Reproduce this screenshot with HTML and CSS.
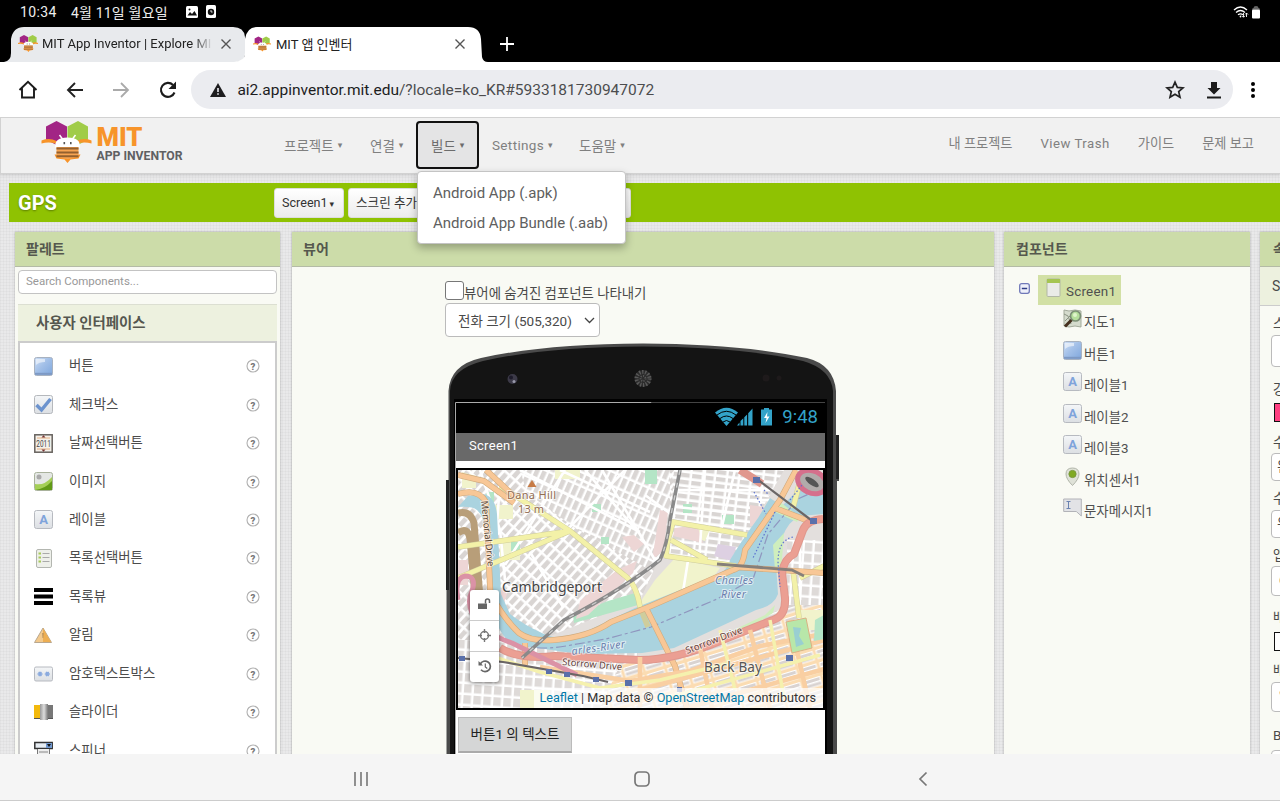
FILE: index.html
```html
<!DOCTYPE html>
<html lang="ko">
<head>
<meta charset="utf-8">
<title>MIT 앱 인벤터</title>
<link rel="stylesheet" href="styles.css">
</head>
<body>
<svg class="defs" width="0" height="0">
  <defs>
    <linearGradient id="blue" x1="0" y1="0" x2="1" y2="1"><stop offset="0" stop-color="#cfdff5"/><stop offset=".45" stop-color="#a3c0e8"/><stop offset="1" stop-color="#7ea6dc"/></linearGradient>
    <linearGradient id="gray" x1="0" y1="0" x2="0" y2="1"><stop offset="0" stop-color="#f4f6f8"/><stop offset="1" stop-color="#dcdfe3"/></linearGradient>
    <linearGradient id="knob" x1="0" x2="1"><stop offset="0" stop-color="#999"/><stop offset=".5" stop-color="#ddd"/><stop offset="1" stop-color="#777"/></linearGradient>
    <symbol id="bee" viewBox="0 0 50 42">
      <path fill="#a22585" d="M4.500 5.500L15 0l10.500 5.500v13L15 24 4.500 18.500z"/>
      <path fill="#a0cc48" d="M26 5.500L36.500 0 46.500 5.500v13L36.500 24 26 18.500z"/>
      <path fill="#f7942a" d="M0 19.500q8-3 15 .5v3Q8 20.500 0 22.500zM50 19.500q-8-3-15 .5v3q7-2.500 15-.5zM13 33.500h26l-2 4-8 1-3 3.500-3-3.500-8-1z"/>
      <path fill="#fff" d="M14 27q-2-10.500 12-10.500T38 27z"/>
      <path d="M21 18l-3-4M31 18l3-4" stroke="#fff" stroke-width="1.500"/>
      <path fill="#f7a452" d="M15 26h22v9q-5 3-11 3t-11-3z"/>
      <path d="M15 27.500h22M15 31.500h22M15 35.300h22" stroke="#93602f" stroke-width="1.900"/>
      <path fill="#555" d="M22 21h1.600v2.200H22zM28.500 21h1.600v2.200h-1.600z"/>
    </symbol>
    <symbol id="i-button" viewBox="0 0 19 19"><rect x=".5" y=".5" width="18" height="18" rx="2" fill="url(#blue)" stroke="#a8b2c0"/><path d="M1 16.800h17" stroke="#7d99c4" stroke-width="2"/><path d="M2 2h9v3q-6 0-9 3z" fill="#fff" opacity=".55"/></symbol>
    <symbol id="i-check" viewBox="0 0 19 19"><rect x=".5" y=".5" width="18" height="18" rx="2" fill="url(#gray)" stroke="#b5b8bc"/><path d="M2.500 10l5 5L16.500 4" fill="none" stroke="#6c93ce" stroke-width="3.500"/></symbol>
    <symbol id="i-date" viewBox="0 0 19 19"><rect x=".8" y=".8" width="17.400" height="17.400" fill="#f5f1eb" stroke="#66625e" stroke-width="1.500"/><path d="M3 4h13M3 15h13" stroke="#e6b082"/><path d="M7.500 3.500l2-2.200 2 2.200zM7.500 15.500l2 2.200 2-2.200z" fill="#733"/><text x="2.300" y="13" font-family="Roboto" font-size="9" textLength="14.500" lengthAdjust="spacingAndGlyphs" fill="#444">2011</text></symbol>
    <symbol id="i-image" viewBox="0 0 19 19"><rect x=".5" y=".5" width="18" height="18" rx="2" fill="#e4e7e4" stroke="#a9b29c"/><circle cx="5" cy="5" r="2.500" fill="#aaa"/><path d="M1 12q9 2 17-7v13H1z" fill="#a4cf56"/><path d="M1 18q10-1 17-9v9z" fill="#619a16"/></symbol>
    <symbol id="i-label" viewBox="0 0 19 19"><rect x=".5" y=".5" width="18" height="18" rx="2" fill="url(#gray)" stroke="#b7bac0"/><text x="9.500" y="14" text-anchor="middle" font-family="Roboto" font-weight="700" font-size="13" fill="#7fa3db">A</text></symbol>
    <symbol id="i-list" viewBox="0 0 19 19"><rect x="2.500" y=".5" width="15" height="18" rx="1.500" fill="#eef0ea" stroke="#b3b6b0"/><path d="M4.500 4.500h2.500M4.500 8.500h2.500M4.500 12.500h2.500" stroke="#a8c95a" stroke-width="2"/><path d="M8.500 4.500h7M8.500 8.500h7M8.500 12.500h7" stroke="#aaa"/></symbol>
    <symbol id="i-listview" viewBox="0 0 19 19"><path d="M0 3h19M0 9.500h19M0 16h19" stroke="#000" stroke-width="4.200"/></symbol>
    <symbol id="i-warn" viewBox="0 0 19 19"><path d="M9 2L17.500 16.500H.5z" fill="#f3c98c" stroke="#b8a78f"/><path d="M9 2l8 14H9z" fill="#edae52"/><path d="M8.300 7h1.200l-.3 5h-.6z" fill="#a78254"/></symbol>
    <symbol id="i-pass" viewBox="0 0 19 19"><rect x=".5" y="3" width="18" height="14" rx="1.500" fill="url(#gray)" stroke="#b7bac0"/><path d="M3.500 10h5M4.800 7.800l2.500 4.400M7.300 7.800l-2.500 4.400M10.800 10h5M12.100 7.800l2.500 4.400M14.600 7.800l-2.500 4.400" stroke="#8aaade" stroke-width="1.500"/></symbol>
    <symbol id="i-slider" viewBox="0 0 19 19"><path d="M0 2h8v14H0z" fill="#f3b90c"/><path d="M12 2h7v14h-7z" fill="#777"/><path d="M0 15.500h19" stroke="#555"/><path d="M6 1h8v16H6z" fill="url(#knob)"/></symbol>
    <symbol id="i-spinner" viewBox="0 0 19 19"><path d="M.8 1.500h17.400v6H.8z" fill="#e7edf3" stroke="#333" stroke-width="1.500"/><path d="M12 2h6v5h-6z" fill="#7198cf"/><path d="M13 3h4l-2 3z" fill="#111"/><path d="M3.500 8v11h12V8" fill="#eee" stroke="#777"/><path d="M5 11h9M5 14h9" stroke="#888"/></symbol>
    <symbol id="i-help" viewBox="0 0 14 14"><circle cx="7" cy="7" r="6" fill="#fff" stroke="#b0b0b0" stroke-width="1.100"/><text x="7" y="10.500" text-anchor="middle" font-family="Roboto" font-weight="900" font-size="9.500" fill="#777">?</text></symbol>
    <symbol id="i-screen" viewBox="0 0 19 19"><rect x="3" y="1" width="13" height="17.500" rx="1" fill="#eaebe7" stroke="#b1b7a6"/><path d="M3 1h13v4H3z" fill="#a5c552"/></symbol>
    <symbol id="i-map" viewBox="0 0 19 19"><path d="M1 1l5 1 6-1 6 1v16l-6-1-6 1-5-1z" fill="#d5dbcd" stroke="#a3aa9b"/><path d="M1 5l4 2 3 8M2 12l5-5" stroke="#8b9382" fill="none"/><circle cx="12.500" cy="7" r="5" fill="#b5df9c" stroke="#7b8f75" stroke-width="1.700"/><path d="M8.500 11L2 17.500" stroke="#46301e" stroke-width="3"/><circle cx="12" cy="6" r="2" fill="#dff5cc"/></symbol>
    <symbol id="i-pin" viewBox="0 0 19 19"><path d="M9.500 18.500Q3 12 3 7q0-6 6.500-6T16 7q0 5-6.500 11.500z" fill="#dfe2d8" stroke="#b1b5aa"/><circle cx="9.500" cy="7" r="3.600" fill="#80aa23" stroke="#78993a"/></symbol>
    <symbol id="i-sms" viewBox="0 0 19 19"><path d="M.7 1h17.600v12.500V18l-5-4.500H.7z" fill="#e2e3e6" stroke="#b2b3b8"/><path d="M3.500 3.500h4M5.500 3.500v7M3.500 10.500h4" stroke="#6b83b0"/></symbol>
    <pattern id="blkA" width="12" height="7.500" patternUnits="userSpaceOnUse" patternTransform="rotate(-48)"><rect width="12" height="7.500" fill="#fff"/><rect x="1" y="1" width="9.500" height="4.700" fill="#d9d5d3"/></pattern>
    <pattern id="blkB" width="7" height="13" patternUnits="userSpaceOnUse" patternTransform="rotate(24)"><rect width="7" height="13" fill="#fff"/><rect x="1" y="1" width="4.600" height="10.500" fill="#dad6d4"/></pattern>
    <pattern id="blkC" width="12" height="7" patternUnits="userSpaceOnUse" patternTransform="rotate(7)"><rect width="12" height="7" fill="#fff"/><rect x="1" y="1" width="9.500" height="4.300" fill="#d9d5d3"/></pattern>
    <pattern id="blkD" width="21" height="13" patternUnits="userSpaceOnUse" patternTransform="rotate(-17)"><rect width="21" height="13" fill="#fbdcb2"/><rect x="1.500" y="2" width="18" height="9.500" fill="#fff"/><rect x="2.500" y="3" width="16" height="3" fill="#d9d3d1"/><rect x="2.500" y="7.500" width="16" height="3" fill="#d9d3d1"/></pattern>
    <pattern id="blkE" width="10" height="11" patternUnits="userSpaceOnUse" patternTransform="rotate(4)"><rect width="10" height="11" fill="#fff"/><rect x="1" y="1" width="7.500" height="8.500" fill="#dedad8"/></pattern>
  </defs>
</svg>

<div class="status">
  <span class="st-time">10:34</span><span class="st-date">4월 11일 월요일</span>
  <svg class="st-ic1" width="12" height="12" viewBox="0 0 12 12"><rect width="12" height="12" rx="1.500" fill="#fff"/><path d="M1.500 9.500L4 6l2 2 2.500-3 2.500 4.500z" fill="#111"/><circle cx="3.500" cy="3.500" r="1" fill="#111"/></svg>
  <svg class="st-ic2" width="10" height="13" viewBox="0 0 10 13"><rect width="10" height="13" rx="1.500" fill="#fff"/><circle cx="5" cy="7" r="3.200" fill="#111"/><path d="M5 5v2h1.600" stroke="#fff" fill="none" stroke-width=".8"/></svg>
  <svg class="st-right" width="28" height="14" viewBox="0 0 28 14"><g fill="none" stroke="#fff" stroke-width="1.300"><path d="M1 5q6.500-6 13 0M3 7.500q4.500-4 9 0M5 9.800q2.500-2 5 0"/></g><circle cx="7.500" cy="11.500" r=".9" fill="#fff"/><path d="M10.500 8v4M9 10.800l1.500 1.500 1.500-1.500M13.500 12V8M12 9.500l1.500-1.500L15 9.500" stroke="#fff" fill="none" stroke-width=".9"/><path d="M19 4.500q0-1.500 1.500-1.500 0-2 2.500-2t2.500 2q1.500 0 1.500 1.500z" fill="#666"/><rect x="19" y="4.500" width="8" height="9" rx="1" fill="#fff"/></svg>
</div>

<div class="tabs">
  <svg class="tab-bg" width="500" height="37" viewBox="0 0 500 37"><path d="M4 37q7-1 7-9V14Q13 2 24 2h209q11 0 12 10v18q-1 7-8 7z" fill="#e8eaed"/><path d="M234 37q11-1 11-9V14q2-12 12-12h211q12 0 13 12l1 18q1 5 6 5z" fill="#fff"/></svg>
  <div class="tab tab-one"><svg width="20" height="19"><use href="#bee"/></svg><span class="tab-title">MIT App Inventor | Explore MI</span><svg class="x" width="10" height="10" viewBox="0 0 10 10"><path d="M.5.500l9 9M9.500.500l-9 9"/></svg></div>
  <div class="tab tab-two"><svg width="18" height="18"><use href="#bee"/></svg><span class="tab-title2">MIT 앱 인벤터</span><svg class="x" width="10" height="10" viewBox="0 0 10 10"><path d="M.5.500l9 9M9.500.500l-9 9"/></svg></div>
  <svg class="plus" width="14" height="14" viewBox="0 0 14 14"><path d="M7 0v14M0 7h14" stroke="#fff" stroke-width="1.800"/></svg>
</div>

<div class="toolbar">
  <svg width="20" height="20" viewBox="0 0 20 20"><path d="M1.500 10L10 1.800 18.500 10M4 8v9.500h12V8" fill="none" stroke="#1b1b1b" stroke-width="1.900"/></svg>
  <svg width="20" height="20" viewBox="0 0 20 20"><path d="M18 10H3M10 3l-7 7 7 7" fill="none" stroke="#222" stroke-width="1.900"/></svg>
  <svg width="20" height="20" viewBox="0 0 20 20"><path d="M2 10h15M10 3l7 7-7 7" fill="none" stroke="#aaa" stroke-width="1.800"/></svg>
  <svg width="20" height="20" viewBox="0 0 20 20"><path d="M16.500 12.500A7 7 0 1 1 15 5" fill="none" stroke="#1b1b1b" stroke-width="2.100"/><path d="M18 1.500V9h-7.500z" fill="#1b1b1b"/></svg>
  <div class="omni">
    <svg width="16" height="14" viewBox="0 0 16 14"><path d="M8 0l8 14H0z" fill="#1d1d1f"/><path d="M7.200 5h1.600v4H7.200zM7.200 10.200h1.600v1.600H7.200z" fill="#ebecf0"/></svg>
    <span class="url"><b>ai2.appinventor.mit.edu</b>/?locale=ko_KR#5933181730947072</span>
    <svg class="star" width="20" height="20" viewBox="0 0 20 20"><path d="M10 2.200l2.300 5.200 5.700.5-4.300 3.700 1.300 5.600-5-3-5 3 1.300-5.600L2 7.900l5.700-.5z" fill="none" stroke="#222" stroke-width="1.700"/></svg>
    <svg class="down" width="16" height="18" viewBox="0 0 16 18"><path d="M5 1h6v6h3.500L8 13.500 1.500 7H5zM1 15.500h14V17.500H1z" fill="#1b1b1b"/></svg>
  </div>
  <svg class="dots" width="6" height="18" viewBox="0 0 6 18"><circle cx="3" cy="3" r="2"/><circle cx="3" cy="9" r="2"/><circle cx="3" cy="15" r="2"/></svg>
</div>

<div class="app">
  <div class="head">
    <svg class="logo" width="145" height="46" viewBox="0 0 145 46"><use href="#bee" x="0" y="3" width="51" height="42"/><text x="55.500" y="28" font-family="Roboto" font-weight="900" font-size="25" fill="#f7942a" textLength="46" lengthAdjust="spacingAndGlyphs">MIT</text><text x="55.500" y="42" font-family="Roboto" font-weight="700" font-size="13.500" fill="#5f6062" textLength="86" lengthAdjust="spacingAndGlyphs">APP INVENTOR</text></svg>
    <div class="menu">
      <span class="m m1">프로젝트<i>▾</i></span><span class="m m2">연결<i>▾</i></span>
      <span class="m sel">빌드<i>▾</i>
        <div class="popup"><div>Android App (.apk)</div><div>Android App Bundle (.aab)</div></div>
      </span>
      <span class="m m4">Settings<i>▾</i></span><span class="m m5">도움말<i>▾</i></span>
    </div>
    <div class="links"><span>내 프로젝트</span><span class="lat">View Trash</span><span>가이드</span><span>문제 보고</span></div>
  </div>
  <div class="green"><h1>GPS</h1><span class="gb gb1">Screen1<i>▾</i></span><span class="gb gb2">스크린 추가</span><span class="gb gb3"></span></div>
  <div class="cols">
    <section class="panel p1"><h2>팔레트</h2>
      <div class="search">Search Components...</div>
      <h3>사용자 인터페이스</h3>
      <ul class="pal">
        <li><svg><use href="#i-button"/></svg><span>버튼</span><svg class="h"><use href="#i-help"/></svg></li>
        <li><svg><use href="#i-check"/></svg><span>체크박스</span><svg class="h"><use href="#i-help"/></svg></li>
        <li><svg><use href="#i-date"/></svg><span>날짜선택버튼</span><svg class="h"><use href="#i-help"/></svg></li>
        <li><svg><use href="#i-image"/></svg><span>이미지</span><svg class="h"><use href="#i-help"/></svg></li>
        <li><svg><use href="#i-label"/></svg><span>레이블</span><svg class="h"><use href="#i-help"/></svg></li>
        <li><svg><use href="#i-list"/></svg><span>목록선택버튼</span><svg class="h"><use href="#i-help"/></svg></li>
        <li><svg><use href="#i-listview"/></svg><span>목록뷰</span><svg class="h"><use href="#i-help"/></svg></li>
        <li><svg><use href="#i-warn"/></svg><span>알림</span><svg class="h"><use href="#i-help"/></svg></li>
        <li><svg><use href="#i-pass"/></svg><span>암호텍스트박스</span><svg class="h"><use href="#i-help"/></svg></li>
        <li><svg><use href="#i-slider"/></svg><span>슬라이더</span><svg class="h"><use href="#i-help"/></svg></li>
        <li><svg><use href="#i-spinner"/></svg><span>스피너</span><svg class="h"><use href="#i-help"/></svg></li>
      </ul>
    </section>
    <section class="panel p2"><h2>뷰어</h2>
      <div class="viewer">
        <div class="cbrow"><span class="cb"></span><span class="cbt">뷰어에 숨겨진 컴포넌트 나타내기</span></div>
        <div class="select"><span>전화 크기 (505,320)</span><svg width="11" height="7" viewBox="0 0 11 7"><path d="M1 1l4.500 4.500L10 1" fill="none" stroke="#444" stroke-width="1.300"/></svg></div>
        <div class="phone">
          <svg class="frame" width="396" height="416" viewBox="0 0 396 416">
            <path d="M1.500 420V138h2V48Q5 22 36 15 100 1 198 .5q98 .5 164 14.500 27 7 29 33v46h3v44h-2v282z" fill="#4a4a4a"/>
            <path d="M5 420V48Q6 26 38 18 100 4 198 3.500q98 .5 160 14.500 28 8 30 30v372z" fill="#141414"/>
            <path d="M1 137h3v110H1zM391 92h3v44h-3z" fill="#222"/>
            <path d="M9 56h373v360H9z" fill="#000"/><path d="M10.500 416V59.500h196" fill="none" stroke="#aaa"/><path d="M207 59.500h173" stroke="#444"/>
            <circle cx="67.500" cy="36" r="5" fill="#3c3a48"/><circle cx="66" cy="34.500" r="2" fill="#1d1b2a"/><circle cx="69" cy="38.500" r="1.500" fill="#99a"/>
            <circle cx="198" cy="35.500" r="8.500" fill="#2c2c2c"/><circle cx="198" cy="35.500" r="6.500" fill="none" stroke="#5a5a5a" stroke-width="4" stroke-dasharray="1.300 1.600"/><circle cx="198" cy="35.500" r="2.500" fill="none" stroke="#5a5a5a" stroke-width="2" stroke-dasharray="1 1.300"/>
            <circle cx="321" cy="35" r="3.500" fill="#1e1a1b"/><circle cx="334" cy="35" r="2.500" fill="#1e1a1b"/>
          </svg>
          <div class="screen">
            <div class="pstat">
              <svg width="60" height="20" viewBox="0 0 60 20"><path d="M0 5.500Q11.500-4 23 5.500L11.500 19z" fill="#33a3c9"/><path d="M2 8q9.500-7.500 19 0M5 11.500q6.500-5 13 0M8 15q3.500-3 7 0" fill="none" stroke="#000" stroke-width="1"/><path d="M22 18.500h2.500v-3zM25.500 18.500V14l2.800-2.800v7.300zM29.300 18.500v-8.300l2.800-2.800v11.100zM33.200 18.500V6.200L37.500 1.500v17z" fill="#33a3c9"/><path d="M46 2.500h3V1h5v1.500h3v16H46z" fill="#33a3c9"/><path d="M52.500 5l-3.500 6h2.500L50.500 16l4-6.500H52z" fill="#fff"/></svg>
              <span>9:48</span>
            </div>
            <div class="ptitle">Screen1</div>
            <div class="map">
              <svg width="366" height="238" viewBox="458 470 366 238">
                <rect x="458" y="470" width="366" height="238" fill="#e3dfdd"/>
                <path d="M458 470h170L700 470 640 600 540 640 458 640z" fill="url(#blkA)"/>
                <path d="M520 470h150v55l-20 45-75-42-48-35z" fill="url(#blkB)"/>
                <path d="M674 470h110l-40 70v25l-76-10z" fill="url(#blkC)"/>
                <path d="M458 640h180v68H458z" fill="url(#blkE)"/>
                <path d="M620 665l90-22 114-55v120H600z" fill="url(#blkD)"/>
                <path d="M787 540h37v65h-37z" fill="url(#blkE)"/>
                <path d="M495 505h18v14h-18zM500 540h20v20h-20zM555 470h25v9h-25zM655 580l20-22 45 10-10 14-45 20-30 8zM690 525l20 4-5 12-18-5zM520 690h30v18h-30zM800 610h24v20h-24zM462 472l14 4v12h-14z" fill="#f1f3cc"/>
                <path d="M573 615l35-14 27-8 3 12-28 8-36 10zM645 470h12v14h-12zM683 504h9v9h-9zM722 515h12v9h-12zM592 504h9v8h-9zM511 542h9v9h-9zM601 537h8v7h-8zM486 492h8v10h-8z" fill="#b4e5c6"/>
                <path d="M617 570l20-9-4 12-45 42-12 4 4-18zM660 510l8 2-4 38-12 10zM675 528l22-3 6 18-30-7zM750 505l14 2-7 19h-7zM622 537l12-2 10 9-10 8zM495 582l12 12-6 18-8-10zM458 560h10v25h-10z" fill="#edd6d5"/>
                <path d="M718 544l18 3-4 14-18-5z" fill="#ddd0e2"/>
                <path d="M520 470l120 62M560 470l90 42M585 470l58 68M602 470l53 90M480 470l20 60 5 50M625 470l-60 62M500 484l-5 65M530 552l33 55M565 470l-60 95M673 490h100M705 470l-6 92M735 470l-15 65M645 495l30 22M690 548l-8 50M800 540v60M735 500h35M676 507l70 7" stroke="#fff" stroke-width="2.600" fill="none"/>
                <path d="M458 507q14-1 19 3 7 6 8 22l3 62q2 26 22 50l55 8 20 2 57-1 32-5 82-38q18-4 22-16l-2-30 6-26q6-17 18-22l23-2v-30l-23 4-18 18-12-8-12 20q-18 25-28 42-2 12-20 18l-75 30q-25 12-58 28-20 4-33-2-20-9-34-20l-9-20-4-80q-2-18-14-20l-15 2z" fill="#aad3df"/>
                <path d="M780 502l20 15-3 5-22-10zM773 545l11-12-3 40-6-3zM740 627l25-12 10-10-2 8-16 10-44 18z" fill="#cfeebd"/>
                <path d="M458 533q10-7 12 6l6 68M458 513q12-3 16 10l6 75" stroke="#b89e79" stroke-width="7" fill="none"/>
                <path d="M500 640q35 12 66 6l40-7 45-12 66-28 36-20 15-45 30-35 26-12" fill="none" stroke="#8f96bf" stroke-width="1.200" stroke-dasharray="10 3 3 3"/>
                <g fill="none" stroke-linejoin="round">
                  <path d="M458 547l112-16M458 578l112-47M500 486l70 45 54 44q12 8 16 32l8 20M747 535l-74-13-5 18-2 16 70 10M671 540l36 20M793 508l10-38M793 570l6 48M800 578l24-12" stroke="#cfcd9c" stroke-width="5.600"/>
                  <path d="M458 547l112-16M458 578l112-47M500 486l70 45 54 44q12 8 16 32M747 535l-74-13-5 18-2 16 70 10M671 540l36 20M793 508l10-38M793 570l6 48M800 578l24-12" stroke="#f3f1a8" stroke-width="4.600"/>
                  <path d="M458 475l26 6 30 22M486 470l30 28M458 494q20-6 28 8l5 105M495 602q12 20 24 31 12 9 35 7 35-3 57-18l40-16 82-36q10-2 12-20l35-50 16-30M736 567l88 6M645 606l30 60 12 42M775 508l36 14M525 665v-22" stroke="#d0aa7c" stroke-width="6"/>
                  <path d="M458 475l26 6 30 22M486 470l30 28M458 494q20-6 28 8l5 105M495 602q12 20 24 31 12 9 35 7 35-3 57-18l40-16 82-36q10-2 12-20l35-50 16-30M736 567l88 6M645 606l30 60 12 42M775 508l36 14M525 665v-22" stroke="#f8c796" stroke-width="4.800"/>
                  <path d="M500 648q20 12 55 8 60 3 85 4 35 0 80-19l53-21q13-4 12-22l-3-25q2-14 12-19l9-24q4-10 20-11M740 470l22 14" stroke="#e0978d" stroke-width="8"/>
                  <path d="M500 648q20 12 55 8 60 3 85 4 35 0 80-19l53-21q13-4 12-22l-3-25q2-14 12-19l9-24q4-10 20-11" stroke="#eb9f93" stroke-width="6"/>
                  <path d="M540 667l90 14 60-10 70-25 64-12M640 657v50M700 648l12 60M750 630l20 78M640 690l184-50M690 707l134-38M790 620l20 88" stroke="#f9cfa2" stroke-width="4.600"/>
                  <path d="M480 652l60 20 60 16 60-8 70-17M720 630l15 60M770 620l14 78M660 700l160-45" stroke="#f5f1ae" stroke-width="3.500"/>
                  <path d="M458 600q-4-22 7-24 12 0 7 15-5 10 0 22 10 20 40 30l65 32" stroke="#db92a6" stroke-width="5"/>
                  <path d="M680 470l-10 50q-3 25-10 40-35 28-96 60l-42 38" stroke="#8a8a8a" stroke-width="3.600"/><path d="M680 470l-10 50q-3 25-10 40-35 28-96 60l-42 38" stroke="#ccc" stroke-width="1.300" stroke-dasharray="5 8"/>
                  <path d="M458 658l45 4 80 14 25 6M757 479l58 44" stroke="#6b6666" stroke-width="2.200"/>
                  <path d="M717 564l75 6 12 6" stroke="#857f7a" stroke-width="2.800"/>
                  <ellipse cx="812" cy="482" rx="15" ry="11" fill="#b1acab" stroke="#d5708c" stroke-width="5" transform="rotate(25 812 482)"/><ellipse cx="812" cy="482" rx="8" ry="3" fill="#555" transform="rotate(35 812 482)"/>
                </g>
                <path d="M786 622l20-4 6 30-20 5z" fill="#b8e7a9" stroke="#d9b184"/><path d="M793 627l8 1-2 8 5 8-8 3z" fill="#99cfd1"/><path d="M815 620l9-5v24l-10 2z" fill="#b4e5c6"/>
                <path d="M753 477h7v6h-7zM810 518h7v6h-7zM459 656h6v5h-6zM546 669h6v5h-6zM564 672h6v5h-6zM593 677h6v5h-6zM625 680h7v6h-7zM786 655h7v6h-7zM677 687h5v5h-5z" fill="#5a70aa"/>
                <path d="M754 492l12 22M775 512l-22 46M793 537q-15 3-15 25l2 25M790 500l12-15M764 490l5 5" fill="none" stroke="#5c72d0" stroke-width="1.200" stroke-dasharray="1.500 2"/>
                <path d="M532 480l4.500 7h-9z" fill="#c77b45"/>
                <g font-family="Noto Sans" paint-order="stroke" stroke="#fff" stroke-opacity=".6" stroke-width="2">
                  <g fill="#936d52" font-size="11"><text x="507" y="499" textLength="49">Dana Hill</text><text x="518" y="513" textLength="26">13 m</text></g>
                  <text x="502" y="592" font-size="14" fill="#444" textLength="100">Cambridgeport</text>
                  <text x="704" y="672" font-size="13.500" fill="#555" textLength="58">Back Bay</text>
                  <g font-size="10.500" font-style="italic" fill="#6a7fae"><text x="715" y="584" textLength="38">Charles</text><text x="721" y="598" textLength="25">River</text><text x="572" y="655" transform="rotate(-8 572 655)" textLength="54">arles-River</text></g>
                  <g font-size="9.500" fill="#643f3a"><text x="562" y="665" transform="rotate(5 562 665)" textLength="60">Storrow Drive</text><text x="687" y="654" transform="rotate(-21 687 654)" textLength="60">Storrow Drive</text><text x="481" y="501" transform="rotate(84 481 501)" textLength="66" fill="#5a4938">Memorial Drive</text></g>
                </g>
              </svg>
              <div class="mapctl">
                <div><svg width="13" height="12" viewBox="0 0 13 12"><path d="M0 5.500h9V11H0z" fill="#666"/><path d="M7.500 5.500V3q0-2 2-2t2 2v2" fill="none" stroke="#666" stroke-width="1.500"/></svg></div>
                <div><svg width="13" height="13" viewBox="0 0 13 13"><circle cx="6.500" cy="6.500" r="4" fill="none" stroke="#777" stroke-width="1.400"/><path d="M6.500 0v4M6.500 9v4M0 6.500h4M9 6.500h4" stroke="#777" stroke-width="1.400"/></svg></div>
                <div><svg width="14" height="13" viewBox="0 0 14 13"><path d="M2.300 4A5.300 5.300 0 1 1 3 9.800" fill="none" stroke="#666" stroke-width="1.700"/><path d="M.5 1v4.500H5z" fill="#666"/><path d="M7.300 3.500V7l2 1.500" fill="none" stroke="#666" stroke-width="1.200"/></svg></div>
              </div>
              <div class="attr"><a>Leaflet</a> | Map data © <a>OpenStreetMap</a> contributors</div>
            </div>
            <div class="pbtn">버튼1 의 텍스트</div>
          </div>
        </div>
      </div>
    </section>
    <section class="panel p3"><h2>컴포넌트</h2>
      <div class="tree">
        <div class="root"><svg class="col" width="11" height="11" viewBox="0 0 11 11"><rect x=".7" y=".7" width="9.600" height="9.600" rx="2" fill="#eef0fa" stroke="#7078b8" stroke-width="1.300"/><path d="M2.800 5.500h5.400" stroke="#2d3a86" stroke-width="1.500"/></svg><div class="rootsel"><svg><use href="#i-screen"/></svg><span>Screen1</span></div></div>
        <div class="t"><svg><use href="#i-map"/></svg><span>지도1</span></div>
        <div class="t"><svg><use href="#i-button"/></svg><span>버튼1</span></div>
        <div class="t"><svg><use href="#i-label"/></svg><span>레이블1</span></div>
        <div class="t"><svg><use href="#i-label"/></svg><span>레이블2</span></div>
        <div class="t"><svg><use href="#i-label"/></svg><span>레이블3</span></div>
        <div class="t"><svg><use href="#i-pin"/></svg><span>위치센서1</span></div>
        <div class="t"><svg><use href="#i-sms"/></svg><span>문자메시지1</span></div>
      </div>
    </section>
    <section class="panel p4"><h2>속성</h2>
      <div class="sub">Screen1</div>
      <div class="props">
        <label class="l1">스크린 소개</label><div class="in i1"></div>
        <label class="l2">강조 색상</label><div class="sw pink"></div>
        <label class="l3">수평 정렬</label><div class="in i3">왼쪽</div>
        <label class="l4">수직 정렬</label><div class="in i4">위</div>
        <label class="l5">앱 이름</label><div class="in i5">GPS</div>
        <label class="l6">배경 색상</label><div class="sw white"></div>
        <label class="l7">배경 이미지</label><div class="in i7">없음</div>
        <label class="l8">BlocksToolkit</label><div class="in i8"></div>
      </div>
    </section>
  </div>
</div>

<div class="nav">
  <svg width="16" height="16" viewBox="0 0 16 16"><path d="M2 1v14M8 1v14M14 1v14" stroke="#777" stroke-width="1.600"/></svg>
  <svg width="16" height="16" viewBox="0 0 16 16"><rect x="1" y="1" width="14" height="14" rx="4" fill="none" stroke="#777" stroke-width="1.700"/></svg>
  <svg width="16" height="16" viewBox="0 0 16 16"><path d="M11.500 1.500L5 8l6.500 6.500" fill="none" stroke="#777" stroke-width="1.700"/></svg>
</div>
</body>
</html>
```

FILE: styles.css
```css
* { box-sizing: border-box; }
body { margin: 0; width: 1280px; height: 801px; overflow: hidden; display: flex; flex-direction: column; background: #fff; font-family: Roboto, "Noto Sans CJK KR", sans-serif; color: #4a4a4a; }
svg { display: block; flex: none; }
svg.defs { position: absolute; }
span, label, h1, h2, h3 { white-space: nowrap; }
i { font-style: normal; font-family: "DejaVu Sans", sans-serif; }

.status { height: 25px; background: #000; color: #eee; display: flex; align-items: center; padding: 0 19px 2px 20px; font-size: 14px; flex: none; }
.st-time { letter-spacing: .4px; }
.st-date { margin-left: 14px; letter-spacing: .2px; }
.st-ic1 { margin-left: 18px; }
.st-ic2 { margin-left: 8px; }
.st-right { margin-left: auto; }

.tabs { height: 37px; background: #000; display: flex; align-items: center; position: relative; flex: none; font-size: 13px; color: #222; }
.tab-bg { position: absolute; left: 0; top: 0; }
.tab { display: flex; align-items: center; position: relative; gap: 4px; }
.tab-one { width: 234px; padding-left: 18px; }
.tab-two { width: 235px; padding-left: 19px; gap: 5px; }
.tab-title { width: 171px; overflow: hidden; -webkit-mask-image: linear-gradient(90deg, #000 88%, transparent); mask-image: linear-gradient(90deg, #000 88%, transparent); }
.tab .x { stroke: #555; stroke-width: 1.4; margin-left: auto; }
.tab-one .x { margin-right: 3px; }
.tab-two .x { margin-right: 4px; }
.plus { margin-left: 31px; }

.toolbar { height: 55px; background: #fff; display: flex; align-items: center; flex: none; padding-left: 18px; }
.toolbar > svg { margin-right: 26.600px; }
.omni { width: 1042px; height: 39px; margin-left: -13px; border-radius: 20px; background: #ebecf0; display: flex; align-items: center; padding-left: 19px; }
.url { font-size: 15.500px; color: #4c4c4e; margin-left: 11px; letter-spacing: 0; }
.url b { font-weight: 400; color: #1c1c1e; }
.star { margin-left: auto; }
.down { margin: 0 11px 0 21px; }
.toolbar > .dots { margin: 0 0 0 17px; }

.app { flex: none; height: 637px; overflow: hidden; background-color: #e9e9ea; background-image: repeating-linear-gradient(0deg, rgba(120,120,120,.05) 0 1px, transparent 1px 3px), repeating-linear-gradient(90deg, rgba(120,120,120,.05) 0 1px, transparent 1px 3px); }
.head { height: 57px; background: #f1f1f1; border: 1px solid #d2d2d2; border-right: 0; display: flex; box-shadow: 0 1px 3px rgba(0,0,0,.12); font-size: 13.500px; color: #808080; }
.logo { margin-left: 40px; }
.menu { display: flex; margin-left: 84px; padding-top: 3px; }
.m { height: 48px; display: flex; align-items: center; padding: 0 14px; position: relative; }
.m i { font-size: 9px; margin-left: 4px; }
.sel { background: #e4e4e5; border: 2px solid #111; border-radius: 4px; padding: 0 13px; margin: 0 -1px; color: #6c6c6c; }
.m1 { width: 86px; }
.m2 { width: 61px; }
.sel { width: 63px; }
.m4 { width: 87px; letter-spacing: .35px; }
.popup { position: absolute; left: -1px; top: 48px; width: 209px; height: 73px; background: #fff; border: 1px solid #c4c4c4; border-radius: 4px; box-shadow: 0 4px 9px rgba(0,0,0,.28); padding: 7px 0 0 15px; z-index: 5; font-size: 15px; color: #606060; line-height: 29.500px; white-space: nowrap; }
.links { margin-left: auto; display: flex; gap: 28px; padding: 16px 26px 0 0; line-height: 20px; font-size: 13.200px; }
.lat { letter-spacing: .5px; }

.green { height: 39px; margin: 9px 0 0 9px; background: #8fc202; display: flex; align-items: center; }
.green h1 { margin: 0; padding: 2px 0 0 9px; width: 265px; color: #fff; font-size: 20px; line-height: 39px; text-shadow: 0 1px 2px rgba(0,0,0,.35); }
.gb { height: 30px; border: 1px solid #ddd; border-radius: 3px; background: linear-gradient(#fff, #ececec); font-size: 12.600px; color: #333; line-height: 28px; padding-left: 7px; overflow: hidden; }
.gb i { font-size: 9px; margin-left: 2px; }
.gb1 { width: 70px; margin-right: 4px; }
.gb2 { width: 120px; margin-right: 4px; }
.gb3 { width: 159px; }

.cols { display: flex; padding: 10px 0 0 15px; height: 531px; }
.panel { background: #f9faf4; height: 540px; flex: none; box-shadow: 0 0 2px rgba(0,0,0,.3); overflow: hidden; }
.panel h2 { margin: 0; height: 35px; background: #ccdca9; border-bottom: 1px solid #b4bba6; font-size: 14px; line-height: 35px; padding-left: 11px; color: #55584e; }
.p1 { width: 265px; }
.p2 { width: 702px; margin-left: 12px; }
.p3 { width: 246px; margin-left: 10px; }
.p4 { width: 266px; margin-left: 10px; }
.p3 h2 { padding-left: 12px; }
.p4 h2 { padding-left: 13px; }
.search { margin: 3px 3px 0; height: 24px; border: 1px solid #c3c3c3; border-radius: 4px; background: #fff; color: #999; font-size: 11.500px; line-height: 21px; padding-left: 7px; }
.panel h3 { margin: 10px 3px 0; height: 37px; background: #edf1df; border-top: 1px solid #dcdfd2; color: #55574f; font-size: 14.400px; line-height: 37px; padding-left: 18px; }
.pal { list-style: none; margin: 0 3px; padding: 2px 0 0; border: 2px solid #ccc; background: #fff; height: 440px; }
.pal li { height: 38.450px; display: flex; align-items: center; padding: 0 15px 0 14px; font-size: 13.400px; color: #4c4c4c; }
.pal li svg { width: 19px; height: 19px; position: relative; top: 2px; }
.pal li svg.h { width: 14px; height: 14px; margin-left: auto; }
.pal span { margin-left: 16px; }

.viewer { padding: 13px 0 0 153px; }
.cbrow { display: flex; height: 23px; }
.cb { width: 19px; height: 19px; border: 1px solid #777; border-radius: 3px; background: #fff; margin-top: 1px; }
.cbt { font-size: 13.400px; line-height: 20px; margin-top: 4px; }
.select { width: 155px; height: 34px; border: 1px solid #bbb; border-radius: 4px; background: #fff; display: flex; align-items: center; justify-content: space-between; padding: 0 4px 0 12px; font-size: 13.500px; }
.phone { position: relative; width: 396px; height: 416px; margin-top: 6px; padding: 60px 0 0 11px; }
.frame { position: absolute; left: 0; top: 0; }
.screen { position: relative; width: 369px; height: 360px; background: #fff; }
.pstat { height: 30px; background: #000; display: flex; align-items: center; justify-content: flex-end; gap: 7px; padding: 0 7px 2px 0; color: #33a3c9; font-size: 18.500px; }
.ptitle { height: 28px; background: #696969; color: #fff; font-size: 13px; line-height: 25px; padding-left: 13px; letter-spacing: .3px; }
.map { position: relative; margin-top: 7px; width: 369px; height: 242px; border: 2px solid #000; overflow: hidden; }
.mapctl { position: absolute; left: 12px; top: 120px; width: 29px; height: 92px; background: #fff; border-radius: 3px; box-shadow: 0 1px 4px rgba(0,0,0,.5); }
.mapctl div { height: 31px; display: flex; align-items: center; justify-content: center; border-bottom: 1px solid #ccc; padding-bottom: 2px; }
.mapctl div:last-child { border: 0; }
.attr { position: absolute; right: 0; bottom: 0; height: 20px; background: rgba(255,255,255,.7); font-size: 12.650px; line-height: 19px; padding: 0 7px 0 5px; color: #333; white-space: nowrap; }
.attr a { color: #0078a8; }
.pbtn { width: 114px; height: 36px; margin: 7px 0 0 2px; background: #d5d6d6; border: 1px solid #bbb; border-bottom: 2px solid #aaa; font-size: 13.500px; line-height: 32px; text-align: center; color: #222; white-space: nowrap; }

.tree { padding: 8px 0 0 15px; font-size: 13.400px; color: #505050; }
.tree div svg { width: 19px; height: 19px; }
.root { display: flex; align-items: center; height: 30px; margin-bottom: -1px; }
.tree .root svg.col { width: 11px; height: 11px; margin-top: -4px; }
.rootsel { margin-left: 8px; width: 83px; height: 30px; background: #d2e0a5; display: flex; padding: 3px 0 0 6px; }
.rootsel span { margin: 4px 0 0 3px; line-height: 20px; letter-spacing: .25px; }
.t { display: flex; height: 31.500px; padding: 5px 0 0 44px; }
.t span { margin: 4px 0 0 2px; line-height: 20px; }

.sub { height: 39px; background: #edf1df; border-bottom: 1px solid #ccc; font-size: 14px; line-height: 38px; padding-left: 12px; }
.props { padding: 0 11px; font-size: 13.400px; display: flex; flex-direction: column; }
.props label { line-height: 20px; height: 20px; margin-left: 2px; }
.in { width: 200px; border: 1px solid #bbb; border-radius: 4px; background: #fff; padding-left: 5px; }
.sw { width: 60px; height: 19px; border: 1px solid #111; margin-left: 3px; }
.pink { background: #ff4081; }
.white { background: #fff; }
.l1 { margin-top: 8px; }
.i1 { height: 32px; margin-top: 1px; }
.l2 { margin-top: 13px; }
.pink { margin-top: 3px; }
.l3 { margin-top: 11px; }
.i3 { height: 28px; margin-top: 0; line-height: 25px; }
.l4 { margin-top: 8px; }
.i4 { height: 28px; margin-top: 1px; line-height: 25px; }
.l5 { margin-top: 8px; }
.i5 { height: 30px; margin-top: 0; line-height: 28px; }
.props .i5, .props .i7 { padding-left: 7px; }
.l6 { margin-top: 12px; }
.white { margin-top: 4px; }
.l7 { margin-top: 10px; }
.i7 { height: 30px; margin-top: 1px; line-height: 27px; }
.l8 { margin-top: 14px; }
.i8 { height: 28px; margin-top: 4px; }

.nav { height: 47px; background: #f5f5f5; border-bottom: 1px solid #ccc; display: flex; align-items: center; padding: 3px 0 0 353px; gap: 265px; flex: none; }
```
